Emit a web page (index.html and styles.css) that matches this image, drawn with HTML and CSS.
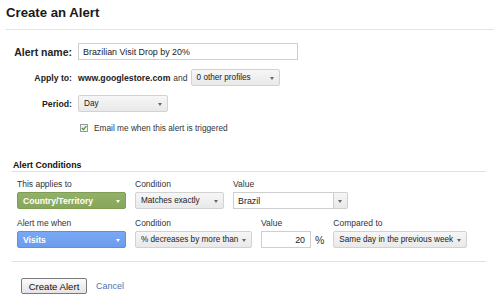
FILE: index.html
```html
<!DOCTYPE html>
<html>
<head>
<meta charset="utf-8">
<link rel="stylesheet" href="styles.css">
</head>
<body>
<div class="page">
  <h1 class="title">Create an Alert</h1>
  <div class="form">
    <span class="lbl lbl-big">Alert name:</span>
    <span class="ctl"><span class="input name-input">Brazilian Visit Drop by 20%</span></span>

    <span class="lbl">Apply to:</span>
    <span class="ctl"><b class="site">www.googlestore.com</b><span class="and">and</span><span class="select profiles">0 other profiles</span></span>

    <span class="lbl">Period:</span>
    <span class="ctl"><span class="select period">Day</span></span>

    <span></span>
    <span class="ctl check-row"><span class="checkbox"><svg width="6" height="6" viewBox="0 0 6 6"><path d="M0.8 3 L2.4 4.6 L5.3 1.2" fill="none" stroke="#3c9a3c" stroke-width="1.3"/></svg></span>Email me when this alert is triggered</span>
  </div>

  <section class="conditions">
    <h2 class="cond-title">Alert Conditions</h2>
    <div class="cond-row">
      <div class="field">
        <span class="flabel">This applies to</span>
        <span class="select dim dim-green">Country/Territory</span>
      </div>
      <div class="field">
        <span class="flabel">Condition</span>
        <span class="select cond1">Matches exactly</span>
      </div>
      <div class="field">
        <span class="flabel">Value</span>
        <span class="combo"><span class="input combo-input">Brazil</span><span class="combo-btn"></span></span>
      </div>
    </div>
    <div class="cond-row">
      <div class="field">
        <span class="flabel">Alert me when</span>
        <span class="select dim dim-blue">Visits</span>
      </div>
      <div class="field">
        <span class="flabel">Condition</span>
        <span class="select cond2">% decreases by more than</span>
      </div>
      <div class="field">
        <span class="flabel">Value</span>
        <span class="value-wrap"><span class="input num-input">20</span><span class="pct">%</span></span>
      </div>
      <div class="field">
        <span class="flabel">Compared to</span>
        <span class="select compared">Same day in the previous week</span>
      </div>
    </div>
  </section>

  <div class="actions">
    <span class="btn">Create Alert</span>
    <a class="cancel" href="#">Cancel</a>
  </div>
</div>
</body>
</html>
```

FILE: styles.css
```css
html, body {
  margin: 0;
  padding: 0;
  background: #ffffff;
}
body {
  font-family: "Liberation Sans", Arial, sans-serif;
  font-size: 8.5px;
  color: #222;
  width: 500px;
  height: 308px;
  overflow: hidden;
}
.page {
  display: flex;
  flex-direction: column;
}
.title {
  margin: 0 0 0 5px;
  width: 488px;
  padding: 5px 0 9px 1px;
  font-size: 13.2px;
  line-height: 15px;
  font-weight: bold;
  color: #1a1a1a;
  border-bottom: 1px solid #e4e4e4;
}
.form {
  margin-top: 13px;
  display: grid;
  grid-template-columns: 72px auto;
  grid-template-rows: 17px 17px 17px 13px;
  column-gap: 6px;
  row-gap: 9px;
  align-items: center;
}
.lbl {
  text-align: right;
  font-weight: bold;
  font-size: 8.7px;
  color: #222;
}
.lbl-big {
  font-size: 10.5px;
}
.ctl {
  display: flex;
  align-items: center;
}
.input {
  box-sizing: border-box;
  height: 17px;
  border: 1px solid #cfcfcf;
  background: #fff;
  display: flex;
  align-items: center;
  padding-left: 4px;
  font-size: 8.9px;
  color: #222;
}
.name-input {
  width: 220px;
}
.site {
  font-weight: bold;
  font-size: 8.7px;
}
.and {
  margin: 0 3px 0 3px;
  color: #333;
}
.select {
  box-sizing: border-box;
  position: relative;
  height: 17px;
  display: flex;
  align-items: center;
  padding-left: 5px;
  border: 1px solid #d2d2d2;
  border-radius: 2px;
  background: linear-gradient(#f6f6f6, #e9e9e9);
  color: #222;
  font-size: 8.2px;
  white-space: nowrap;
  overflow: hidden;
}
.select::after {
  content: "";
  position: absolute;
  right: 5px;
  top: 7px;
  border-left: 2.5px solid transparent;
  border-right: 2.5px solid transparent;
  border-top: 3px solid #666;
}
.profiles {
  width: 89px;
}
.period {
  width: 90px;
}
.check-row {
  padding-left: 2px;
  color: #333;
  font-size: 8.3px;
}
.checkbox {
  box-sizing: border-box;
  width: 8px;
  height: 8px;
  border: 1px solid #9a9a9a;
  background: #f4f4f4;
  margin-right: 6px;
  display: flex;
  align-items: center;
  justify-content: center;
}
.checkbox svg {
  display: block;
}

.conditions {
  margin: 26px 0 0 12px;
  width: 474px;
  padding-bottom: 13px;
  border-bottom: 1px solid #e0e0e0;
  display: flex;
  flex-direction: column;
}
.cond-title {
  margin: 0 0 7px 0;
  padding: 0 0 1px 1px;
  font-size: 8.8px;
  line-height: 10px;
  font-weight: bold;
  color: #111;
  border-bottom: 1px solid #e0e0e0;
}
.cond-row {
  display: flex;
  gap: 9px;
  padding-left: 5px;
}
.cond-row + .cond-row {
  margin-top: 9px;
}
.field {
  display: flex;
  flex-direction: column;
  gap: 2px;
}
.flabel {
  line-height: 11px;
  color: #333;
}
.dim {
  width: 109px;
  color: #fff;
  font-weight: bold;
  font-size: 8.6px;
}
.dim::after {
  border-top-color: #fff;
}
.dim-green {
  background: linear-gradient(#93b168, #87a65c);
  border-color: #7f9d55;
}
.dim-blue {
  background: linear-gradient(#79a8f4, #6b9cee);
  border-color: #5f8fe0;
}
.cond1 {
  width: 89px;
}
.cond2 {
  width: 117px;
}
.compared {
  width: 134px;
}
.combo {
  display: flex;
}
.combo-input {
  width: 101px;
}
.combo-btn {
  box-sizing: border-box;
  position: relative;
  width: 14px;
  height: 17px;
  border: 1px solid #cfcfcf;
  border-left: none;
  border-radius: 0 2px 2px 0;
  background: linear-gradient(#f6f6f6, #e9e9e9);
}
.combo-btn::after {
  content: "";
  position: absolute;
  left: 4px;
  top: 7px;
  border-left: 2.5px solid transparent;
  border-right: 2.5px solid transparent;
  border-top: 3px solid #666;
}
.value-wrap {
  display: flex;
  align-items: center;
}
.num-input {
  width: 50px;
  justify-content: flex-end;
  padding: 0 5px 0 0;
}
.pct {
  margin-left: 4px;
  font-size: 10.5px;
  color: #333;
}

.actions {
  margin: 16px 0 0 21px;
  display: flex;
  align-items: center;
  gap: 9px;
}
.btn {
  box-sizing: border-box;
  width: 66px;
  height: 16px;
  border: 1px solid #7a7a7a;
  border-radius: 2px;
  background: linear-gradient(#fbfbfb, #e4e4e4);
  display: flex;
  align-items: center;
  justify-content: center;
  font-size: 9.6px;
  color: #111;
}
.cancel {
  font-size: 9px;
  color: #4a74b4;
  text-decoration: none;
}
```
